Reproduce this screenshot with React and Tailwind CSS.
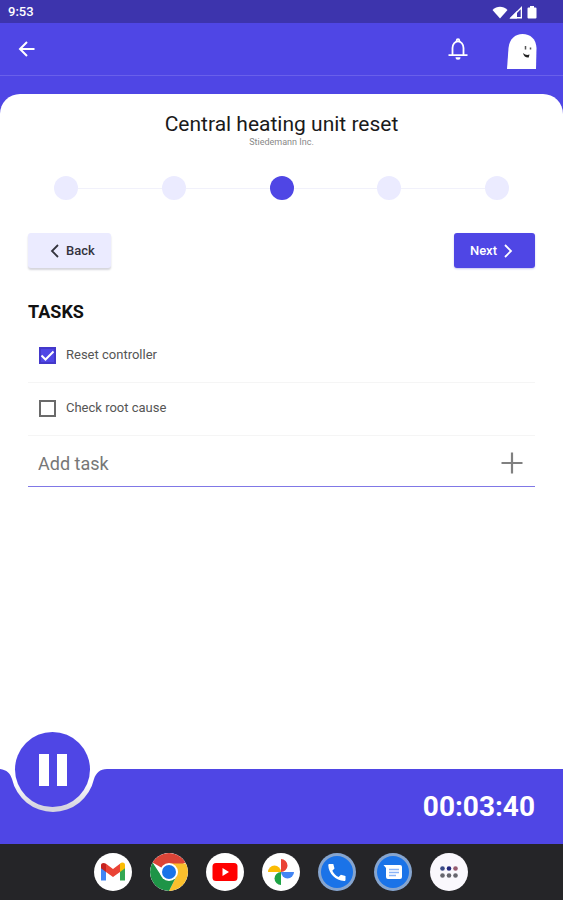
import React, { useState } from 'react'
import clsx from 'clsx'

const steps = ['Details', 'Checklist', 'Tasks', 'Materials', 'Summary']

function StatusBar() {
  return (
    <div className="flex h-[23px] items-center justify-between bg-[#3d34ad] pl-2 pr-6 text-white">
      <span className="text-[13px] font-medium">9:53</span>
      <div className="flex items-center">
        <svg className="h-4 w-[18px]" viewBox="0 0 18 16" fill="currentColor">
          <path d="M9 14.500 1.500 6C6 1.700 12 1.700 16.500 6Z" />
        </svg>
        <svg className="h-4 w-4" viewBox="0 0 16 16" fill="currentColor">
          <path fillRule="evenodd" d="M13 2v12.500H.5ZM11.700 5.200 8 9v4h3.700Z" />
          <path d="M.5 14.500 8 7v7.500Z" />
        </svg>
        <svg className="h-4 w-[14px]" viewBox="1 0 14 16" fill="currentColor">
          <path d="M6 2h4v1.500h1.500q1 0 1 1v9q0 1-1 1h-7q-1 0-1-1v-9q0-1 1-1H6Z" />
        </svg>
      </div>
    </div>
  )
}

function Header() {
  return (
    <header className="flex h-[53px] items-center justify-between border-b border-[#6960ea] pl-[14px] pr-6 text-white">
      <button type="button" aria-label="Go back" className="flex h-6 w-6 items-center justify-center">
        <svg className="h-5 w-5" viewBox="0 0 20 20" fill="none" stroke="currentColor" strokeWidth="2">
          <path d="M18.500 10H4M11 3 4 10l7 7" />
        </svg>
      </button>
      <div className="flex items-center gap-9">
        <button type="button" aria-label="Notifications">
          <svg className="h-6 w-6" viewBox="0 0 24 24" fill="none" stroke="currentColor" strokeWidth="1.800">
            <path d="M5.500 18v-7a5.500 6.700 0 0 1 11 0v7M1.500 18.200h19" />
            <path d="M9.700 4.300V3.500a1.300 1.300 0 0 1 2.600 0v.8" />
            <path d="M8.500 20.300h5a2.500 2.500 0 0 1-5 0Z" fill="currentColor" stroke="none" />
          </svg>
        </button>
        <button type="button" aria-label="Profile" className="pt-1">
          <svg className="h-9 w-8" viewBox="0 0 32 36">
            <path d="M0 36 1.500 15C2.500 6 8 1 15.500 1c8 0 13.500 5 14 14l-.5 21Z" fill="#fff" />
            <path d="M18.500 13v3.500M23.500 14.500v2" stroke="#555" strokeWidth="1.500" />
            <path d="M16 20c2 2 4.500 2.500 6.500 1.500l-.8 3c-2.700.3-5-1-5.700-4.500Z" fill="#222" />
          </svg>
        </button>
      </div>
    </header>
  )
}

function Stepper({ current }) {
  return (
    <ol className="mt-7 flex items-center px-[54px]">
      {steps.map((step, index) => (
        <React.Fragment key={step}>
          {index > 0 && <li aria-hidden="true" className="h-px flex-1 bg-[#f1f1fb]" />}
          <li
            aria-label={step}
            aria-current={index === current ? 'step' : undefined}
            className={clsx('h-6 w-6 rounded-full', index === current ? 'bg-[#4f46e5]' : 'bg-[#ebebff]')}
          />
        </React.Fragment>
      ))}
    </ol>
  )
}

function TaskRow({ task, onToggle }) {
  return (
    <li className="border-b border-[#f5f5f5]">
      <label className="flex h-[52px] items-center gap-[10px] pb-[2px] pl-[11px]">
        <span className="relative flex h-[17px] w-[17px]">
          <input
            type="checkbox"
            checked={task.done}
            onChange={() => onToggle(task.id)}
            className="h-full w-full appearance-none border-2 border-[#6a6a6a] checked:border-[#4338ca] checked:bg-[#4f46e5]"
          />
          {task.done && (
            <svg
              className="pointer-events-none absolute inset-0 h-full w-full"
              viewBox="0 0 17 17"
              fill="none"
              stroke="#fff"
              strokeWidth="2"
            >
              <path d="M2.500 8.500 6.500 12.500 14.500 4.500" />
            </svg>
          )}
        </span>
        <span className="text-[13px] text-[#555]">{task.title}</span>
      </label>
    </li>
  )
}

function TimerBar({ time }) {
  const [paused, setPaused] = useState(false)

  return (
    <footer className="relative flex h-[75px] items-center justify-end bg-[#4f46e5] px-7">
      {/* Notch around the pause button */}
      <svg className="absolute left-0 top-0 h-11 w-[120px]" viewBox="0 0 120 44">
        <defs>
          <linearGradient id="notch" x1="0" y1="0" x2="0" y2="1">
            <stop offset="0.300" stopColor="#fff" />
            <stop offset="0.900" stopColor="#d6d5df" />
          </linearGradient>
        </defs>
        <path d="M0 0C7 1 10 4 12 10A42 42 0 0 0 94 10C96 4 100 0 107 0Z" fill="url(#notch)" />
      </svg>
      <button
        type="button"
        aria-label={paused ? 'Resume' : 'Pause'}
        onClick={() => setPaused(!paused)}
        className="absolute -top-[37px] left-[15px] flex h-[75px] w-[75px] items-center justify-center rounded-full bg-[#4f46e5]"
      >
        <svg className="h-8 w-7" viewBox="0 0 28 32" fill="#fff">
          <path d="M0 0h10v32H0ZM18 0h10v32H18Z" />
        </svg>
      </button>
      <time className="text-[28px] font-bold text-white">{time}</time>
    </footer>
  )
}

function DockIcon({ label, className, children }) {
  return (
    <button
      type="button"
      aria-label={label}
      className={clsx('flex h-[38px] w-[38px] items-center justify-center overflow-hidden rounded-full', className)}
    >
      <svg className="h-[38px] w-[38px]" viewBox="0 0 38 38">
        {children}
      </svg>
    </button>
  )
}

function Dock() {
  return (
    <nav className="flex h-14 items-center justify-center gap-[18px] bg-[#252528] pr-[2px]">
      <DockIcon label="Gmail" className="bg-white">
        <path d="M7 13v14.500h5V17Z" fill="#4285f4" />
        <path d="M26 17v10.500h5V13Z" fill="#34a853" />
        <path d="M26 12.500V19l5-3.700V12c0-2.600-3-3.200-5-1.500Z" fill="#fbbc04" />
        <path d="M12 10.800 19 16l7-5.200V19l-7 5-7-5Z" fill="#ea4335" />
        <path d="M7 12v3.300l5 3.700v-8.200c-2-1.500-5-1-5 1.200Z" fill="#c5221f" />
      </DockIcon>
      <DockIcon label="Chrome" className="bg-white">
        <path d="M19 19 2.550 9.500A19 19 0 0 1 35.450 9.500Z" fill="#db4437" />
        <path d="M19 10.500H36A19 19 0 0 1 19 38L26.400 23.200Z" fill="#fbc02d" />
        <path d="M2.550 9.500A19 19 0 0 0 19 38L26.400 23.200 19 27 11.600 23.200Z" fill="#1e9447" />
        <circle cx="19" cy="19" r="9" fill="#fff" />
        <circle cx="19" cy="19" r="7" fill="#1a73e8" />
      </DockIcon>
      <DockIcon label="YouTube" className="bg-white">
        <rect x="6.500" y="10" width="25" height="18" rx="3.500" fill="#f00" />
        <path d="M16.500 15v8l6.500-4Z" fill="#fff" />
      </DockIcon>
      <DockIcon label="Photos" className="bg-white">
        <path d="M19 19V6a6.500 6.500 0 0 1 6.500 6.500V13a6.500 6.500 0 0 1-6.500 6Z" fill="#ea4335" />
        <path d="M19 19h13a6.500 6.500 0 0 1-13 0Z" fill="#4285f4" />
        <path d="M19 19v13a6.500 6.500 0 0 1 0-13Z" fill="#1ea446" />
        <path d="M19 19H6a6.500 6.500 0 0 1 13 0Z" fill="#fbbc04" />
      </DockIcon>
      <DockIcon label="Phone" className="bg-[#86a5cf]">
        <circle cx="19" cy="19" r="16" fill="#1a73e8" />
        <path
          d="M11.500 11h3.800l1.200 4.500-2.200 2.200c1.500 3 3.500 5 6.300 6.300l2.300-2.200 4.600 1.200v3.700c0 .8-.5 1.300-1.300 1.300C17.500 27.500 10.500 20.500 10.300 12.300c0-.8.5-1.300 1.200-1.300Z"
          fill="#fff"
        />
      </DockIcon>
      <DockIcon label="Messages" className="bg-[#86a5cf]">
        <circle cx="19" cy="19" r="16" fill="#1a73e8" />
        <path d="M9.500 12H26q2 0 2 2v10q0 2-2 2H14q-2 0-2-2v-9Z" fill="#fff" />
        <path d="M15 16.500h10M15 19.500h10M15 22.500h7" stroke="#8ab4f8" strokeWidth="1.400" />
      </DockIcon>
      <DockIcon label="All apps" className="bg-[#faf8fd]">
        <circle cx="12.500" cy="15.500" r="2.300" fill="#3a4a86" />
        <circle cx="19" cy="15.500" r="2.300" fill="#22277e" />
        <circle cx="25.500" cy="15.500" r="2.300" fill="#965b70" />
        <circle cx="12.500" cy="22.500" r="2.300" fill="#66666e" />
        <circle cx="19" cy="22.500" r="2.300" fill="#66666e" />
        <circle cx="25.500" cy="22.500" r="2.300" fill="#66666e" />
      </DockIcon>
    </nav>
  )
}

function App() {
  const [step, setStep] = useState(2)
  const [newTask, setNewTask] = useState('')
  const [tasks, setTasks] = useState([
    { id: 1, title: 'Reset controller', done: true },
    { id: 2, title: 'Check root cause', done: false },
  ])

  const toggleTask = (id) => {
    setTasks(tasks.map((t) => (t.id === id ? { ...t, done: !t.done } : t)))
  }

  const addTask = (e) => {
    e.preventDefault()
    if (!newTask.trim()) return
    setTasks([...tasks, { id: Date.now(), title: newTask.trim(), done: false }])
    setNewTask('')
  }

  return (
    <div className="flex min-h-screen flex-col bg-[#4f46e5] font-['Roboto',sans-serif]">
      <StatusBar />
      <Header />

      <main className="mt-[18px] flex-1 rounded-t-[20px] bg-white">
        <div className="pt-[18px] text-center">
          <h1 className="text-[21px] leading-6 text-[#1a1a1a]">Central heating unit reset</h1>
          <p className="text-[9px] leading-3 text-[#888]">Stiedemann Inc.</p>
        </div>

        <Stepper current={step} />

        <div className="px-7">
          <div className="mt-[33px] flex justify-between">
            <button
              type="button"
              onClick={() => setStep(Math.max(0, step - 1))}
              className="flex h-[35px] items-center gap-[6px] rounded-[3px] bg-[#ebebff] pl-[22px] pr-4 text-[13px] font-medium text-[#33333d] shadow-[0_2px_2px_#d5d5dc]"
            >
              <svg className="h-4 w-[10px]" viewBox="0 0 10 16" fill="none" stroke="currentColor" strokeWidth="1.800">
                <path d="M8 2 2 8l6 6" />
              </svg>
              Back
            </button>
            <button
              type="button"
              onClick={() => setStep(Math.min(steps.length - 1, step + 1))}
              className="flex h-[35px] items-center gap-[6px] rounded-[3px] bg-[#4f46e5] pl-4 pr-[22px] text-[13px] font-medium text-white shadow-[0_1px_2px_#c9c7f0]"
            >
              Next
              <svg className="h-4 w-[10px]" viewBox="0 0 10 16" fill="none" stroke="currentColor" strokeWidth="1.800">
                <path d="M2 2l6 6-6 6" />
              </svg>
            </button>
          </div>

          <h2 className="mt-8 text-[18px] font-bold leading-6 text-[#111]">TASKS</h2>
          <ul className="mt-[6px]">
            {tasks.map((task) => (
              <TaskRow key={task.id} task={task} onToggle={toggleTask} />
            ))}
          </ul>

          <form onSubmit={addTask} className="flex h-[51px] items-center border-b border-[#8078e6] pl-[10px] pr-[11px] pt-1">
            <input
              type="text"
              aria-label="Add task"
              placeholder="Add task"
              value={newTask}
              onChange={(e) => setNewTask(e.target.value)}
              className="min-w-0 flex-1 text-[18px] text-[#333] outline-none placeholder:text-[#777]"
            />
            <button type="submit" aria-label="Add" className="text-[#808080]">
              <svg className="h-6 w-6" viewBox="0 0 24 24" fill="none" stroke="currentColor" strokeWidth="2.200">
                <path d="M12 1.500v21M1.500 12h21" />
              </svg>
            </button>
          </form>
        </div>
      </main>

      <TimerBar time="00:03:40" />
      <Dock />
    </div>
  )
}

export default App
